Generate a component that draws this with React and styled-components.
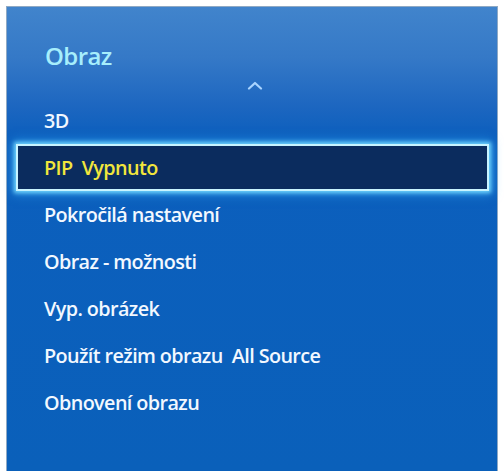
import React from "react";
import styled, { createGlobalStyle } from "styled-components";

const items = [
  { label: "3D" },
  { label: "PIP  Vypnuto", selected: true },
  { label: "Pokročilá nastavení" },
  { label: "Obraz - možnosti" },
  { label: "Vyp. obrázek" },
  { label: "Použít režim obrazu  All Source" },
  { label: "Obnovení obrazu" },
];

export default function App() {
  return (
    <>
      <Global />
      <Panel>
        <Title>Obraz</Title>
        <Chevron>
          <svg width="16" height="9" viewBox="0 0 16 9">
            <path
              d="M2 7.5 L8 2 L14 7.5"
              fill="none"
              stroke="#a9d4ff"
              strokeWidth="2.2"
              strokeLinecap="round"
              strokeLinejoin="round"
            />
          </svg>
        </Chevron>
        <List>
          {items.map((it) => (
            <Row key={it.label} selected={it.selected}>
              {it.label}
            </Row>
          ))}
        </List>
      </Panel>
    </>
  );
}

const Global = createGlobalStyle`
  body {
    margin: 0;
    background: #fff;
  }
`;

const Panel = styled.div`
  margin: 6px 4px 0 6px;
  width: 492px;
  height: 465px;
  box-sizing: border-box;
  border: 1px solid #8fa9c4;
  border-bottom: none;
  background: linear-gradient(
    to bottom,
    #4184cc 0px,
    #3579c7 50px,
    #1c66c0 100px,
    #0c5fbd 130px,
    #0a60ba 100%
  );
  display: flex;
  flex-direction: column;
  font-family: "Open Sans", "Noto Sans", sans-serif;
`;

const Title = styled.div`
  padding: 31px 0 0 38px;
  height: 35px;
  font-size: 24px;
  font-weight: 600;
  letter-spacing: -0.6px;
  color: #a6eefc;
  line-height: 35px;
`;

const Chevron = styled.div`
  display: flex;
  justify-content: center;
  padding-top: 8px;
  padding-left: 6px;
  box-sizing: border-box;
  height: 24px;
`;

const List = styled.div`
  display: flex;
  flex-direction: column;
`;

const Row = styled.div`
  height: 47px;
  margin: 0 8px 0 9px;
  padding-left: 26px;
  box-sizing: border-box;
  display: flex;
  align-items: center;
  white-space: pre;
  font-size: 19.8px;
  font-weight: 600;
  letter-spacing: -0.6px;
  color: ${({ selected }) => (selected ? "#f2e63c" : "#f2f8ff")};
  border: 2px solid ${({ selected }) => (selected ? "#c8f4ff" : "transparent")};
  background: ${({ selected }) => (selected ? "#0b2c5e" : "transparent")};
  box-shadow: ${({ selected }) =>
    selected
      ? "0 0 4px 2px rgba(120, 220, 255, 0.9), 0 0 10px 3px rgba(60, 180, 255, 0.6)"
      : "none"};
`;
